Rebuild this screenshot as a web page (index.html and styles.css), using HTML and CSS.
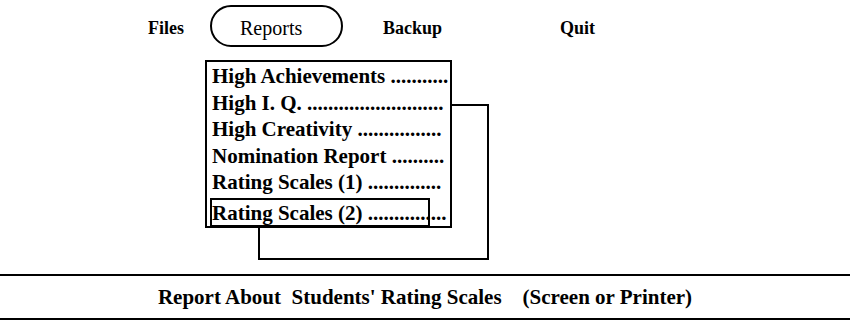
FILE: index.html
```html
<html>
<head>
	<meta charset="UTF-8">
	<link rel="stylesheet" href="styles.css">
</head>
<body>
	<div class="menubar">
		<span class="item item-files">Files</span>
		<span class="item item-reports">Reports</span>
		<span class="item item-backup">Backup</span>
		<span class="item item-quit">Quit</span>
	</div>
	<div class="dropdown">
		<div class="dropdown-list">
			<div class="entry">High Achievements ...........</div>
			<div class="entry">High I. Q. ..........................</div>
			<div class="entry">High Creativity ................</div>
			<div class="entry">Nomination Report ..........</div>
			<div class="entry">Rating Scales (1) ..............</div>
			<div class="entry entry-selected">Rating Scales (2) ...............</div>
		</div>
	</div>
	<div class="status">
		<p>Report About&nbsp; Students' Rating Scales &nbsp;&nbsp; (Screen or Printer)</p>
	</div>
</body>
</html>
```

FILE: styles.css
```css
body {
	margin: 0;
	background-color: white;
	color: black;
	font-family: "Liberation Serif", serif;
}
.menubar {
	display: flex;
	align-items: center;
	height: 52px;
	padding-left: 148px;
}
.menubar .item {
	font-weight: bold;
	font-size: 18px;
	padding-top: 4px;
}
.menubar .item-files {
	width: 62px;
}
.menubar .item-reports {
	box-sizing: border-box;
	width: 133px;
	height: 42px;
	line-height: 35px;
	padding-left: 28px;
	border: 2px solid black;
	border-radius: 21px;
	font-weight: normal;
	font-size: 20px;
	margin-right: 40px;
}
.menubar .item-backup {
	width: 177px;
}
.dropdown {
	position: relative;
	margin-left: 205px;
	margin-top: 8px;
	width: 247px;
	height: 168px;
}
.dropdown::before {
	content: "";
	position: absolute;
	left: 53px;
	top: 44px;
	width: 227px;
	height: 152px;
	border: 2px solid black;
}
.dropdown-list {
	position: relative;
	box-sizing: border-box;
	height: 168px;
	padding: 1px 0 0 5px;
	border: 2px solid black;
	background-color: white;
	overflow: hidden;
}
.entry {
	font-weight: bold;
	font-size: 21px;
	line-height: 26.5px;
	white-space: nowrap;
	overflow: hidden;
	width: 236px;
}
.entry-selected {
	box-sizing: border-box;
	width: 220px;
	height: 29px;
	line-height: 26px;
	border: 2px solid black;
	margin-left: -2px;
	margin-top: 2px;
	overflow: visible;
}
.status {
	margin-top: 46px;
	border-top: 2px solid black;
	border-bottom: 2px solid black;
	height: 42px;
	display: flex;
	align-items: center;
	justify-content: center;
}
.status p {
	margin: 0;
	font-weight: bold;
	font-size: 21px;
	white-space: pre;
}
```
